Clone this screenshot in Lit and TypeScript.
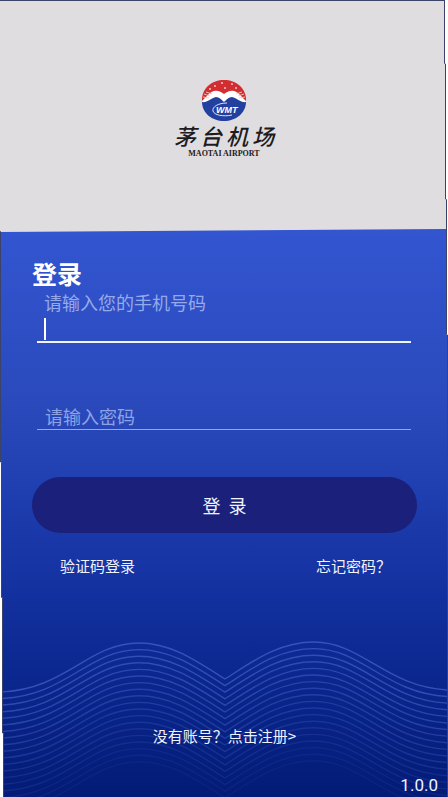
import { LitElement, html, css, svg } from "lit";
import { customElement } from "lit/decorators.js";

const WAVE_COUNT = 19;
const WAVE =
  "M0 52 C66 50 88 3 139 3 C172 3 198 22 225 39 C252 22 278 2 314 2 C362 2 386 47 448 50";

@customElement("airport-logo")
export class AirportLogo extends LitElement {
  static styles = css`
    :host {
      display: flex;
      flex-direction: column;
      align-items: center;
      color: #1d1b20;
    }
    .emblem {
      display: block;
      width: 46px;
      height: 42px;
    }
    .name {
      display: flex;
      gap: 4px;
      font: italic 500 22px/26px "Noto Sans CJK SC", sans-serif;
    }
    .latin {
      font: bold 8px/10px "Liberation Serif", serif;
      margin-top: 1px;
    }
    .wmt {
      font: italic bold 9px "Liberation Sans", sans-serif;
    }
  `;

  render() {
    return html`
      <svg class="emblem" viewBox="0 0 46 42" role="img" aria-label="WMT">
        <path d="M1 22 C0 8 11 0 23 0 C35 0 46 8 45 22 Z" fill="#d22d31" />
        <path d="M1 21 C6 16 9 12 13 11 C17 10 20 12 23 14 C26 12 29 10 33 11 C37 12 40 16 45 21 L44 27 L23 30 L2 27 Z" fill="#fff" />
        <path d="M1 22 C6 23 10 18 15 17 C18 17 21 20 23 22 C25 20 28 17 31 17 C36 18 40 23 45 22 C45 33 35 41 23 41 C11 41 1 33 1 22 Z" fill="#2140a0" />
        <path d="M3 14 L9 16 M2 17 L8 18 M5 12 L11 14 M43 14 L37 16 M44 17 L38 18 M41 12 L35 14" fill="none" stroke="#f6c9c4" stroke-width="0.9" />
        <g fill="#f7d9cf">
          <circle cx="21" cy="3" r="0.9" />
          <circle cx="14" cy="6" r="0.9" />
          <circle cx="31" cy="4" r="0.9" />
          <circle cx="24" cy="8" r="0.9" />
          <circle cx="35" cy="8" r="0.9" />
          <circle cx="9" cy="9" r="0.9" />
        </g>
        <path d="M26 23 C17 23 11 27 12 31 C13 35 22 37 31 35" fill="none" stroke="#dfe5fa" stroke-width="1" />
        <text class="wmt" x="15" y="33" fill="#fff">WMT</text>
      </svg>
      <div class="name"><span>茅</span><span>台</span><span>机</span><span>场</span></div>
      <div class="latin">MAOTAI AIRPORT</div>
    `;
  }
}

@customElement("app-root")
export class AppRoot extends LitElement {
  static styles = css`
    :host {
      display: block;
      background: #fff;
      font-family: "Noto Sans CJK SC", sans-serif;
    }
    * {
      box-sizing: border-box;
    }
    .edge {
      background: #3b4468;
      clip-path: polygon(
        0 0, calc(100% - 3px) 0, calc(100% - 3px) 8%, calc(100% - 2px) 8%, calc(100% - 2px) 25%,
        calc(100% - 1px) 25%, calc(100% - 1px) 42%, 100% 42%, 100% 100%,
        3px 100%, 3px 92%, 2px 92%, 2px 75%, 1px 75%, 1px 58%, 0 58%
      );
    }
    .screen {
      display: flex;
      flex-direction: column;
      min-height: 100vh;
      background: #dfdde0;
      clip-path: polygon(
        0 1px, calc(100% - 4px) 1px, calc(100% - 4px) 8%, calc(100% - 3px) 8%, calc(100% - 3px) 25%,
        calc(100% - 2px) 25%, calc(100% - 2px) 42%, calc(100% - 1px) 42%, calc(100% - 1px) 100%,
        4px 100%, 4px 92%, 3px 92%, 3px 75%, 2px 75%, 2px 58%, 1px 58%, 1px 29%, 0 29%
      );
    }
    .hero {
      padding: 80px 0 70px;
    }
    .panel {
      position: relative;
      flex: 1;
      display: flex;
      flex-direction: column;
      padding: 28px 31px 0 32px;
      color: #f0f3ff;
      background: linear-gradient(#3355d0, #2949bb 32%, #1735a5 58%, #0b2890 78%, #031b76);
      clip-path: polygon(0 3px, 100% 0, 100% 100%, 0 100%);
    }
    .waves {
      position: absolute;
      left: 0;
      right: 0;
      bottom: 0;
      width: 100%;
      height: 157px;
    }
    .wave {
      fill: none;
      stroke: #7c9cff;
      stroke-width: 1.4;
    }
    .title {
      margin: 0;
      font-size: 25px;
      line-height: 32px;
      font-weight: 700;
      color: #fff;
    }
    .form {
      display: flex;
      flex-direction: column;
    }
    .field {
      position: relative;
      margin: 0 6px 0 5px;
      border-bottom: 2px solid #f1f3ff;
    }
    .field label {
      display: block;
      padding-left: 7px;
      font-size: 18px;
      line-height: 26px;
      color: #96a9ea;
    }
    .field input {
      display: block;
      width: 100%;
      height: 26px;
      padding: 0 8px;
      border: 0;
      outline: 0;
      background: none;
      color: #fff;
      font: 18px/26px "Noto Sans CJK SC", sans-serif;
    }
    .field input::placeholder {
      color: #8fa2e6;
      opacity: 1;
    }
    .caret {
      position: absolute;
      left: 7px;
      bottom: 1px;
      width: 2px;
      height: 22px;
      background: #fff;
    }
    .password {
      margin-top: 60px;
      border-bottom: 1px solid #8fa6f0;
    }
    .submit {
      height: 56px;
      margin-top: 47px;
      border: 0;
      border-radius: 28px;
      background: #1b217b;
      color: #f0f3ff;
      font: 18px/24px "Noto Sans CJK SC", sans-serif;
      white-space: pre;
    }
    .links {
      display: flex;
      justify-content: space-between;
      margin: 22px 26px 0 28px;
    }
    a {
      position: relative;
      color: inherit;
      text-decoration: none;
      font-size: 15px;
      line-height: 22px;
    }
    .register {
      align-self: center;
      margin-top: auto;
    }
    .version {
      position: relative;
      align-self: flex-end;
      margin: 26px -21px 0 0;
      font: 17px/24px Roboto, sans-serif;
    }
  `;

  render() {
    return html`
      <div class="edge">
        <main class="screen">
          <header class="hero"><airport-logo></airport-logo></header>
          <section class="panel">
            <svg class="waves" viewBox="0 0 448 157" preserveAspectRatio="none" aria-hidden="true">
              ${Array.from(
                { length: WAVE_COUNT },
                (_, i) => svg`<path class="wave" d=${WAVE} transform="translate(0 ${i * 6.6})"
                  stroke-opacity=${0.36 - i * 0.017} />`
              )}
            </svg>
            <h1 class="title">登录</h1>
            <form class="form" @submit=${(e: Event) => e.preventDefault()}>
              <div class="field">
                <label for="phone">请输入您的手机号码</label>
                <input id="phone" type="tel" />
                <span class="caret"></span>
              </div>
              <div class="field password">
                <input type="password" aria-label="请输入密码" placeholder="请输入密码" />
              </div>
              <button class="submit" type="submit">登  录</button>
            </form>
            <nav class="links">
              <a href="#code">验证码登录</a>
              <a href="#forgot">忘记密码？</a>
            </nav>
            <a class="register" href="#register">没有账号？点击注册&gt;</a>
            <div class="version">1.0.0</div>
          </section>
        </main>
      </div>
    `;
  }
}
